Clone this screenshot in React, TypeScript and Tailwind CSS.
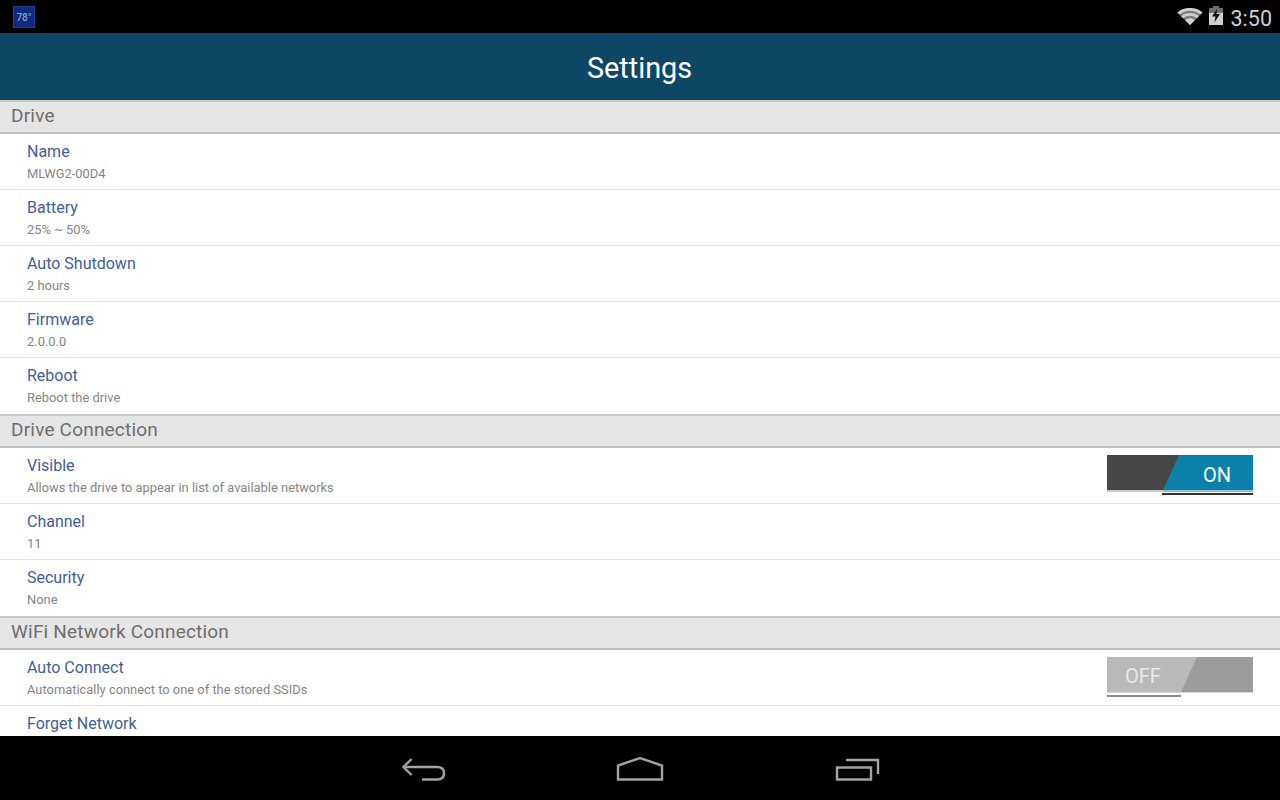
import React from 'react';

type Item = { title: string; value?: string; toggle?: 'on' | 'off' };

const sections: { name: string; items: Item[] }[] = [
  {
    name: 'Drive',
    items: [
      { title: 'Name', value: 'MLWG2-00D4' },
      { title: 'Battery', value: '25% ~ 50%' },
      { title: 'Auto Shutdown', value: '2 hours' },
      { title: 'Firmware', value: '2.0.0.0' },
      { title: 'Reboot', value: 'Reboot the drive' },
    ],
  },
  {
    name: 'Drive Connection',
    items: [
      { title: 'Visible', value: 'Allows the drive to appear in list of available networks', toggle: 'on' },
      { title: 'Channel', value: '11' },
      { title: 'Security', value: 'None' },
    ],
  },
  {
    name: 'WiFi Network Connection',
    items: [
      { title: 'Auto Connect', value: 'Automatically connect to one of the stored SSIDs', toggle: 'off' },
      { title: 'Forget Network' },
    ],
  },
];

function ToggleSwitch({ state }: { state: 'on' | 'off' }) {
  const on = state === 'on';
  return (
    <div className="relative h-[42px] w-[146px]">
      {on ? (
        <svg width="146" height="42" viewBox="0 0 146 42" className="block">
          <rect x="0" y="0" width="146" height="35" fill="#464646" />
          <rect x="0" y="35" width="56" height="2" fill="#c9c9c9" />
          <polygon points="72,0 146,0 146,35 56,35" fill="#0a80ab" />
          <rect x="56" y="35" width="90" height="2" fill="#8fc4d8" />
          <rect x="55" y="38" width="91" height="2" fill="#333333" />
        </svg>
      ) : (
        <svg width="146" height="42" viewBox="0 0 146 42" className="block">
          <rect x="0" y="0" width="146" height="35" fill="#9c9c9c" />
          <polygon points="0,0 90,0 74,35 0,35" fill="#b9b9b9" />
          <rect x="0" y="35" width="146" height="1" fill="#d8d8d8" />
          <rect x="0" y="38" width="74" height="2" fill="#8c8c8c" />
        </svg>
      )}
      <span
        className={`absolute flex h-[35px] items-center text-[20px] leading-none ${
          on ? 'left-[96px] top-[2px] text-white' : 'left-[18px] top-[1px] text-[#e9e9e9]'
        }`}
      >
        {on ? 'ON' : 'OFF'}
      </span>
    </div>
  );
}

function Row({ item, last }: { item: Item; last: boolean }) {
  return (
    <div
      className={`flex h-[56px] shrink-0 items-start justify-between pl-[27px] pr-[27px] ${
        last ? '' : 'border-b border-[#e3e3e3]'
      }`}
    >
      <div>
        <div className="mt-[7px] text-[16px] leading-[22px] text-[#40609a]">{item.title}</div>
        {item.value && <div className="mt-[1px] text-[12.9px] leading-[20px] text-[#858585]">{item.value}</div>}
      </div>
      {item.toggle && (
        <div className="mt-[7px]">
          <ToggleSwitch state={item.toggle} />
        </div>
      )}
    </div>
  );
}

export default function App() {
  return (
    <div
      className="flex h-[800px] w-[1280px] flex-col overflow-hidden bg-white"
      style={{ fontFamily: 'Roboto, "Noto Sans", sans-serif' }}
    >
      {/* status bar */}
      <div className="flex h-[33px] shrink-0 items-center justify-between bg-black pl-[13px] pr-[8px]">
        <div className="mt-[1px] flex h-[22px] w-[22px] items-center justify-center border border-[#24408f] bg-[#0b2a80] text-[10px] font-medium text-[#8d9cc4]">
          78°
        </div>
        <div className="flex items-center">
          <svg width="26" height="17" viewBox="0 1.5 26 18.5" preserveAspectRatio="none" className="mr-[6px]">
            <path d="M0.5 6.5 A18 18 0 0 1 25.5 6.5 L13 20 Z" fill="#7c7c7c" />
            <path d="M0.5 6.5 A18 18 0 0 1 25.5 6.5 L23.6 8.6 A15.4 15.4 0 0 0 2.4 8.6 Z" fill="#d0d0d0" />
            <path d="M4.2 10.5 A13 13 0 0 1 21.8 10.5 L19.9 12.6 A10.4 10.4 0 0 0 6.1 12.6 Z" fill="#d0d0d0" />
            <path d="M8 14.6 A7.6 7.6 0 0 1 18 14.6 L13 20 Z" fill="#d0d0d0" />
          </svg>
          <svg width="14" height="19" viewBox="0 0 14 20" preserveAspectRatio="none" className="mb-[2px] mr-[8px]">
            <rect x="4" y="0" width="6" height="2" fill="#6f6f6f" />
            <rect x="0" y="2" width="14" height="5" fill="#6f6f6f" />
            <rect x="0" y="7" width="14" height="13" fill="#cfcfcf" />
            <polygon points="8,3 3,11 6.5,11 5.5,17 11,8.5 7.5,8.5" fill="#111111" />
          </svg>
          <span className="mt-[4px] text-[21.5px] leading-none text-[#d0d0d0]">3:50</span>
        </div>
      </div>

      {/* title */}
      <div className="flex h-[67px] shrink-0 items-center justify-center bg-[#0e4766] pr-[1px] pt-[4px] text-[28.8px] text-white">
        Settings
      </div>

      {/* list */}
      <div className="min-h-0 flex-1 overflow-hidden">
        {sections.map((section) => (
          <div key={section.name}>
            <div className="flex h-[34px] items-center border-y-2 border-t-[#c8c8c8] border-b-[#bdbdbd] bg-[#e5e5e5] pb-[2px] pl-[11px] text-[19px] tracking-[0.2px] text-[#6e6e6e]">
              {section.name}
            </div>
            {section.items.map((item, i) => (
              <Row key={item.title} item={item} last={i === section.items.length - 1} />
            ))}
          </div>
        ))}
      </div>

      {/* nav bar */}
      <div className="flex h-[64px] shrink-0 items-start justify-center bg-black pt-[20px]">
        <svg width="480" height="26" viewBox="0 0 480 26" fill="none" stroke="#a3a3a3" strokeWidth="2.4">
          <path d="M11.5 3 L3.5 11 L11.5 19" />
          <path d="M3.5 11 H37 Q44 11 44 17.2 Q44 23.5 37 23.5 H22" />
          <path d="M218 23.5 V9.5 L240 2 L262 9.5 V23.5 Z" />
          <path d="M437 11.5 H471 V23.5 H437 Z" />
          <path d="M446 4 H478 V18" />
        </svg>
      </div>
    </div>
  );
}
